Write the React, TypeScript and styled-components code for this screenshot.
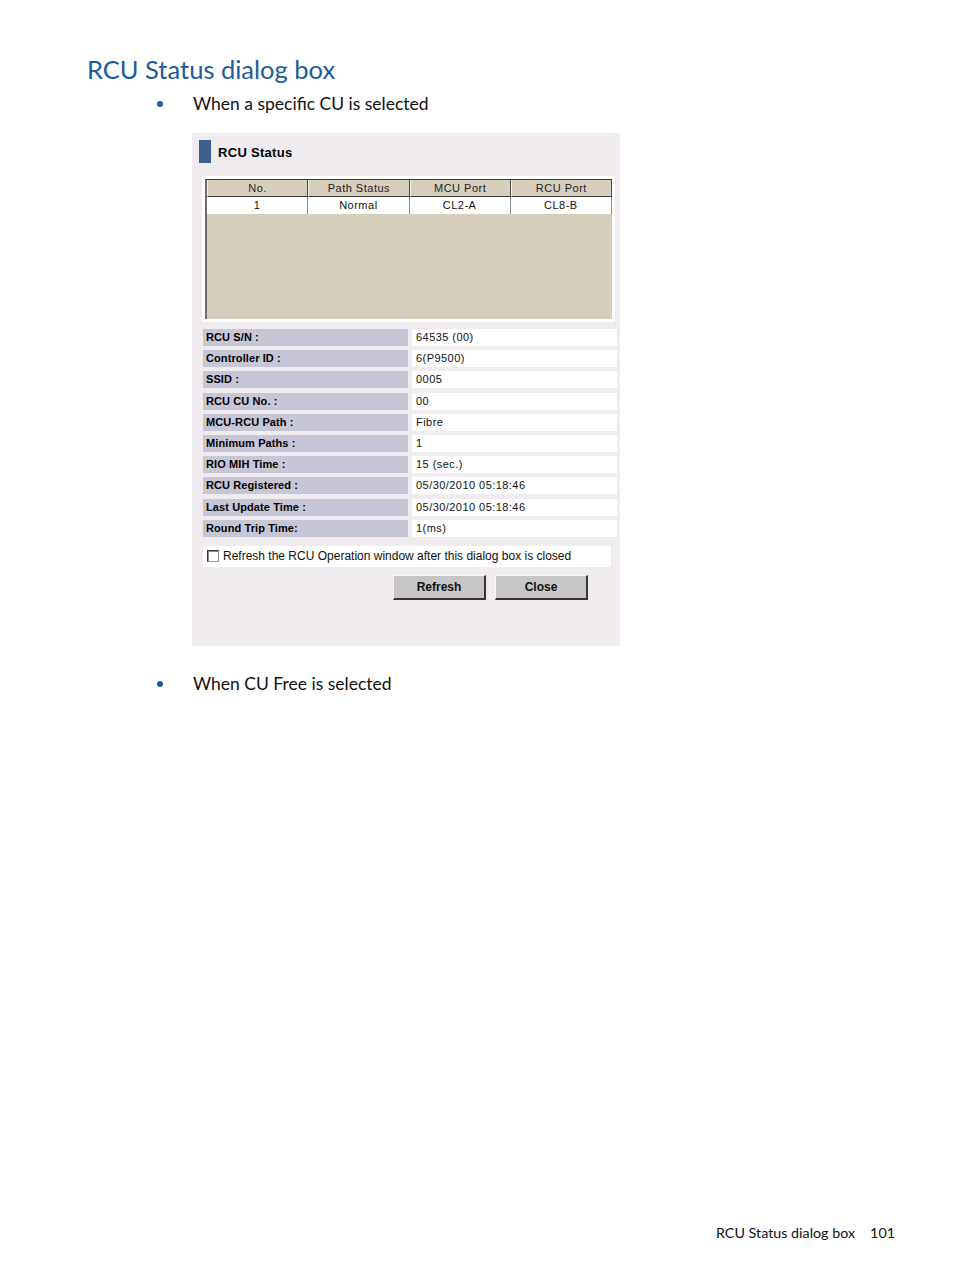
import React from "react";
import styled, { createGlobalStyle } from "styled-components";

const GlobalStyle = createGlobalStyle`
  html, body { margin: 0; padding: 0; background: #ffffff; }
  * { box-sizing: border-box; }
`;

const Page = styled.div`
  width: 954px;
  min-height: 1271px;
  display: flex;
  flex-direction: column;
  padding-top: 52px;
  font-family: Lato, "Open Sans", sans-serif;
  color: #111;
`;

const Heading = styled.h1`
  margin: 0 0 0 87px;
  font-weight: 400;
  font-size: 25.5px;
  line-height: 34px;
  color: #1d5b9a;
`;

const Bullet = styled.div<{ $top: number }>`
  display: flex;
  align-items: center;
  margin-top: ${(p) => p.$top}px;
  margin-left: 157px;
  font-size: 17.5px;
  line-height: 24px;
  color: #111;
`;

const Dot = styled.span`
  width: 6px;
  height: 6px;
  border-radius: 50%;
  background: #1d5b9a;
  margin-right: 30px;
`;

const Dialog = styled.section`
  margin: 17px 0 0 192px;
  width: 428px;
  height: 513px;
  background: #efebef;
  padding-top: 7px;
  display: flex;
  flex-direction: column;
  font-family: "Liberation Sans", Arial, sans-serif;
  color: #000;
`;

const TitleRow = styled.div`
  display: flex;
  align-items: center;
  gap: 7px;
  margin-left: 7px;
  height: 23px;
`;

const TitleBar = styled.span`
  width: 12px;
  height: 23px;
  background: #3d5f8c;
`;

const TitleText = styled.h2`
  margin: 2px 0 0 0;
  font-size: 13px;
  font-weight: bold;
  letter-spacing: 0.3px;
`;

const TableBox = styled.div`
  margin: 13px 0 0 10px;
  width: 413px;
  height: 146px;
  background: #ffffff;
  padding: 3px;
`;

const Table = styled.div`
  height: 100%;
  background: #d5cebd;
  border-left: 2px solid #6f6a66;
  border-top: 1px solid #3a3a3a;
  display: grid;
  grid-template-columns: repeat(4, 1fr);
  grid-template-rows: 17px 17px 1fr;
`;

const HeadCell = styled.div`
  background: #d6cfbe;
  border-right: 1px solid #4a4a4a;
  border-left: 1px solid #f4f1ea;
  border-bottom: 1px solid #3a3a3a;
  font-size: 11px;
  line-height: 16px;
  letter-spacing: 0.5px;
  text-align: center;
  color: #222;
`;

const DataCell = styled.div`
  background: #ffffff;
  border-right: 1px solid #8e8e8e;
  font-size: 11px;
  line-height: 17px;
  letter-spacing: 0.5px;
  text-align: center;
  color: #111;
`;

const InfoGrid = styled.div`
  margin: 7px 0 0 11px;
  display: grid;
  grid-template-columns: 205px 205px;
  grid-auto-rows: 17px;
  column-gap: 4px;
  row-gap: 4.2px;
`;

const Label = styled.div`
  background: #c6c6d6;
  font-size: 11px;
  font-weight: bold;
  line-height: 17px;
  letter-spacing: 0.1px;
  padding-left: 3px;
  color: #000;
`;

const Value = styled.div`
  background: #ffffff;
  font-size: 11px;
  line-height: 17px;
  letter-spacing: 0.45px;
  padding-left: 4px;
  color: #111;
`;

const CheckRow = styled.label`
  margin: 9px 0 0 11px;
  width: 408px;
  height: 21px;
  background: #ffffff;
  display: flex;
  align-items: center;
  gap: 4px;
  padding-left: 4px;
  font-size: 12px;
  color: #111;
`;

const CheckBox = styled.span`
  width: 12px;
  height: 12px;
  border-top: 1px solid #3a3a3a;
  border-left: 1px solid #3a3a3a;
  border-right: 1px solid #9a9a9a;
  border-bottom: 1px solid #9a9a9a;
  box-shadow: inset 1px 1px 0 #8a8a8a;
  background: #fff;
`;

const ButtonRow = styled.div`
  margin: 8px 0 0 201px;
  display: flex;
  gap: 9px;
`;

const Button = styled.button`
  width: 93px;
  height: 25px;
  background: #c6c6c6;
  border-top: 1px solid #f6f6f6;
  border-left: 1px solid #f6f6f6;
  border-right: 2px solid #3b342c;
  border-bottom: 2px solid #3b342c;
  padding: 0;
  font-family: "Liberation Sans", Arial, sans-serif;
  font-size: 12px;
  font-weight: bold;
  color: #111;
`;

const Footer = styled.footer`
  margin-top: auto;
  margin-bottom: 29px;
  margin-right: 59px;
  display: flex;
  justify-content: flex-end;
  gap: 15px;
  font-size: 14.3px;
  line-height: 18px;
  color: #111;
`;

const headers = ["No.", "Path Status", "MCU Port", "RCU Port"];
const row = ["1", "Normal", "CL2-A", "CL8-B"];
const info: [string, string][] = [
  ["RCU S/N :", "64535 (00)"],
  ["Controller ID :", "6(P9500)"],
  ["SSID :", "0005"],
  ["RCU CU No. :", "00"],
  ["MCU-RCU Path :", "Fibre"],
  ["Minimum Paths :", "1"],
  ["RIO MIH Time :", "15 (sec.)"],
  ["RCU Registered :", "05/30/2010 05:18:46"],
  ["Last Update Time :", "05/30/2010 05:18:46"],
  ["Round Trip Time:", "1(ms)"],
];

export default function App() {
  return (
    <>
      <GlobalStyle />
      <Page>
        <Heading>RCU Status dialog box</Heading>
        <Bullet $top={6}>
          <Dot />
          When a specific CU is selected
        </Bullet>
        <Dialog>
          <TitleRow>
            <TitleBar />
            <TitleText>RCU Status</TitleText>
          </TitleRow>
          <TableBox>
            <Table>
              {headers.map((h) => (
                <HeadCell key={h}>{h}</HeadCell>
              ))}
              {row.map((c) => (
                <DataCell key={c}>{c}</DataCell>
              ))}
            </Table>
          </TableBox>
          <InfoGrid>
            {info.map(([l, v]) => (
              <React.Fragment key={l}>
                <Label>{l}</Label>
                <Value>{v}</Value>
              </React.Fragment>
            ))}
          </InfoGrid>
          <CheckRow>
            <CheckBox />
            Refresh the RCU Operation window after this dialog box is closed
          </CheckRow>
          <ButtonRow>
            <Button>Refresh</Button>
            <Button>Close</Button>
          </ButtonRow>
        </Dialog>
        <Bullet $top={26}>
          <Dot />
          When CU Free is selected
        </Bullet>
        <Footer>
          <span>RCU Status dialog box</span>
          <span>101</span>
        </Footer>
      </Page>
    </>
  );
}
